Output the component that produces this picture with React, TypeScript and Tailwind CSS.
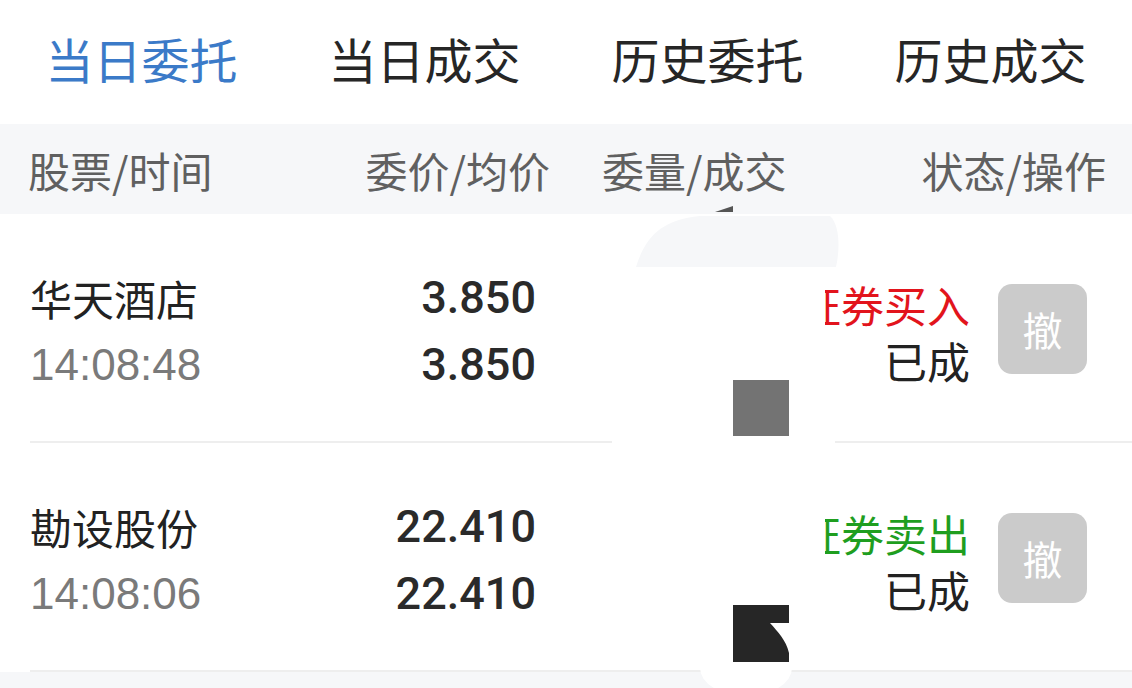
const tabs = ["当日委托", "当日成交", "历史委托", "历史成交"];

const orders = [
  { name: "华天酒店", time: "14:08:48", price: "3.850", avg: "3.850", side: "证券买入", buy: true, status: "已成" },
  { name: "勘设股份", time: "14:08:06", price: "22.410", avg: "22.410", side: "证券卖出", buy: false, status: "已成" },
];

const cjk = "font-['Noto_Sans_CJK_SC',sans-serif]";
const num = "font-['Liberation_Sans','Noto_Sans_CJK_SC',sans-serif]";

function OrderRow({ o }: { o: (typeof orders)[number] }) {
  return (
    <div className="flex h-[227px] items-start">
      <div className="flex w-[300px] flex-col gap-[17px] pl-[30px] pt-[59px]">
        <div className={`${cjk} text-[42px] leading-[50px] text-[#222]`}>{o.name}</div>
        <div className={`${num} text-[44px] leading-[50px] text-[#7a7a7a]`}>{o.time}</div>
      </div>
      <div className="flex w-[236px] flex-col items-end gap-[17px] pt-[59px] font-['Roboto',sans-serif] text-[45px] font-medium leading-[50px] text-[#2a2a2a]">
        <div>{o.price}</div>
        <div>{o.avg}</div>
      </div>
      <div className="flex-1" />
      <div className={`${cjk} flex flex-col items-end gap-[6px] pt-[65px] text-[43px] leading-[50px]`}>
        <div className={o.buy ? "text-[#e2141c]" : "text-[#1f9e1f]"}>{o.side}</div>
        <div className="text-[#222]">{o.status}</div>
      </div>
      <div className="ml-[28px] mr-[45px] mt-[70px] flex h-[90px] w-[89px] items-center justify-center rounded-[14px] bg-[#cbcbcb]">
        <span className={`${cjk} text-[40px] text-white`}>撤</span>
      </div>
    </div>
  );
}

export default function App() {
  return (
    <div className="relative h-[688px] w-[1132px] overflow-hidden bg-white">
      <div className="flex h-[124px]">
        {tabs.map((t, i) => (
          <div
            key={t}
            className={`${cjk} flex flex-1 items-center justify-center pb-[8px] text-[48px] ${i === 0 ? "text-[#3b7ac8]" : "text-[#262626]"}`}>
            {t}
          </div>
        ))}
      </div>
      <div className={`${cjk} flex h-[90px] items-center bg-[#f6f7f9] text-[42px] text-[#606060]`}>
        <div className="w-[300px] pl-[28px]">股票/时间</div>
        <div className="w-[250px] text-right">委价/均价</div>
        <div className="w-[250px] pl-[52px]">委量/成交</div>
        <div className="flex-1 pr-[26px] text-right">状态/操作</div>
      </div>
      {orders.map((o) => (
        <div key={o.name}>
          <OrderRow o={o} />
          <div className="ml-[30px] h-[2px] bg-[#eeeeee]" />
        </div>
      ))}
      <div className="h-[40px] bg-[#f6f7f9]" />

      {/* redaction marks over the volume column */}
      <svg className="pointer-events-none absolute left-0 top-0" width="1132" height="688">
        <rect x="612" y="214" width="213" height="454" fill="#fff" />
        <rect x="825" y="380" width="10" height="90" fill="#fff" />
        <path d="M636 267 C645 238 660 220 700 216 L830 216 C840 225 840 250 836 267 Z" fill="#f6f7f9" />
        <path d="M715 212 L733 206 L733 212 Z" fill="#555" />
        <ellipse cx="746" cy="668" rx="46" ry="28" fill="#fff" />
        <rect x="733" y="380" width="56" height="56" fill="#737373" />
        <path d="M733 605 H789 V623 H770 C778 632 786 640 789 653 V662 H733 Z" fill="#262626" />
      </svg>
    </div>
  );
}
